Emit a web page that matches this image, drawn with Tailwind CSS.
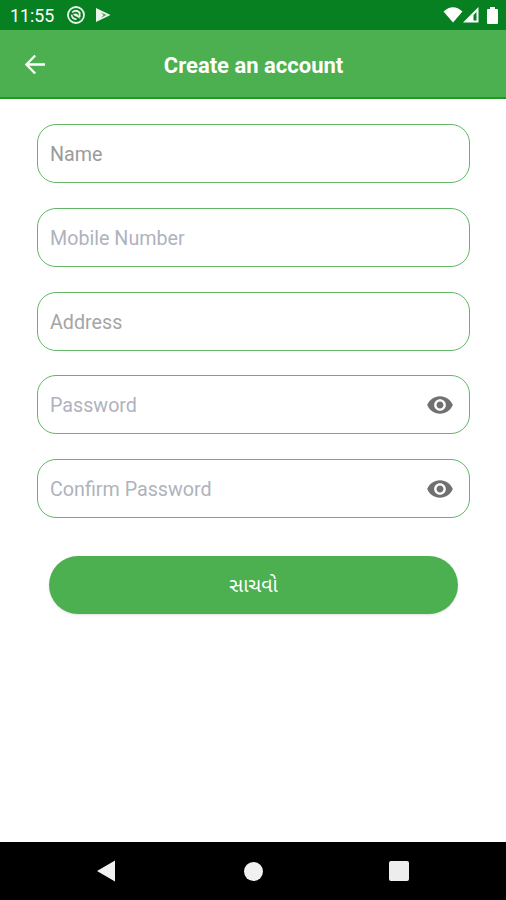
<!DOCTYPE html>
<html lang="en">
<head>
    <meta charset="UTF-8">
    <meta name="viewport" content="width=device-width, initial-scale=1.0">
    <title>Create an account</title>
    <script src="https://cdn.jsdelivr.net/npm/@tailwindcss/browser@4"></script>
    <style>
        body {
            font-family: Roboto, 'Noto Sans', 'Noto Sans Gujarati', sans-serif;
        }
    </style>
</head>
<body class="bg-white">
    <div class="w-[506px] h-[900px] flex flex-col overflow-hidden">
        <!-- Status bar -->
        <div class="h-[30px] shrink-0 bg-[#078021] flex items-center pl-[10px] pr-2 text-white">
            <span class="text-[17.8px] leading-[30px] w-[46px] pt-[2px] whitespace-nowrap">11:55</span>
            <svg class="ml-[10px] w-5 h-5" viewBox="0 0 20 20" fill="none" stroke="#e9f5ea">
                <circle cx="10" cy="10" r="8" stroke-width="1.8" />
                <path d="M6.2 7.4Q10 4 13.6 7.6V12" stroke-width="1.8" />
                <path d="M5.6 9.6Q6 14 10.6 14.2" stroke-width="1.6" />
                <path d="M7 9q3-1.5 5 .8l2.5 4.2-3.7-2.2Q8.6 11.5 7 9z" fill="#e9f5ea" stroke="none" />
            </svg>
            <svg class="ml-[9px] w-4 h-4" viewBox="0 0 16 16">
                <path d="M1 1l14.5 7L1 15z" fill="#e9f5ea" />
                <path d="M6 5.5l5.5 2.5L6 10.8l2.5-2.8z" fill="#4f9f5d" />
            </svg>
            <div class="ml-auto flex items-center">
                <svg class="w-5 h-4" viewBox="0 0 20 16">
                    <path d="M0.5 4.5Q10-4 19.5 4.5L10 15.5z" fill="#fff" />
                </svg>
                <svg class="w-4 h-4" viewBox="0 0 16 16">
                    <path d="M15.5 0v15.5H0z" fill="#fff" />
                    <path d="M13.5 5v8.5h-3V8z" fill="#078021" />
                </svg>
                <svg class="ml-2 w-[11px] h-[17px]" viewBox="0 0 11 17">
                    <path d="M3 0h5v2h2q1 0 1 1v13q0 1-1 1H1q-1 0-1-1V3q0-1 1-1h2z" fill="#fff" />
                </svg>
            </div>
        </div>

        <!-- Header -->
        <header class="h-[69px] shrink-0 bg-[#4caf50] border-b-2 border-[#1f9a22] grid grid-cols-[72px_1fr_72px] items-center">
            <button class="pl-[25px]" aria-label="Back">
                <svg class="w-5 h-5" viewBox="0 0 20 20" fill="none" stroke="#fff" stroke-width="2.3">
                    <path d="M20 10.5H2M10.2 1.5L1.4 10.5l8.8 9" />
                </svg>
            </button>
            <h1 class="text-center text-white font-bold text-[22px] leading-7 pt-[4px] pl-px whitespace-nowrap">Create an account</h1>
        </header>

        <!-- Form -->
        <form class="flex-1 pt-[25px] pl-[37px] pr-[36px]">
            <div class="flex flex-col gap-[24.8px]">
                <input type="text" placeholder="Name" class="block w-full h-[59px] rounded-[19px] border-[1.5px] border-[#62b665] px-3 pt-[2px] text-[19.7px] placeholder:text-[#9b9b9b]">
                <input type="tel" placeholder="Mobile Number" class="block w-full h-[59px] rounded-[19px] border-[1.5px] border-[#62b665] px-3 pt-[2px] text-[19.7px] placeholder:text-[#afb3bd]">
                <input type="text" placeholder="Address" class="block w-full h-[59px] rounded-[19px] border-[1.5px] border-[#62b665] px-3 pt-[2px] text-[19.7px] placeholder:text-[#a5a5a5]">
                <div class="flex items-center h-[59px] rounded-[19px] border-[1.5px] border-[#62b665] pl-3 pr-[15px]">
                    <input type="password" placeholder="Password" class="flex-1 min-w-0 h-full pt-[2px] text-[19.7px] placeholder:text-[#afb3bd]">
                    <svg class="w-7 h-7" viewBox="0 0 24 24" fill="#707070">
                        <path d="M12 4.5C7 4.5 2.73 7.61 1 12c1.73 4.39 6 7.5 11 7.5s9.27-3.11 11-7.5c-1.73-4.39-6-7.5-11-7.5zM12 17c-2.76 0-5-2.24-5-5s2.24-5 5-5 5 2.24 5 5-2.24 5-5 5zm0-8c-1.66 0-3 1.34-3 3s1.34 3 3 3 3-1.34 3-3-1.34-3-3-3z" />
                    </svg>
                </div>
                <div class="flex items-center h-[59px] rounded-[19px] border-[1.5px] border-[#62b665] pl-3 pr-[15px]">
                    <input type="password" placeholder="Confirm Password" class="flex-1 min-w-0 h-full pt-[2px] text-[19.7px] placeholder:text-[#afb3bd]">
                    <svg class="w-7 h-7" viewBox="0 0 24 24" fill="#707070">
                        <path d="M12 4.5C7 4.5 2.73 7.61 1 12c1.73 4.39 6 7.5 11 7.5s9.27-3.11 11-7.5c-1.73-4.39-6-7.5-11-7.5zM12 17c-2.76 0-5-2.24-5-5s2.24-5 5-5 5 2.24 5 5-2.24 5-5 5zm0-8c-1.66 0-3 1.34-3 3s1.34 3 3 3 3-1.34 3-3-1.34-3-3-3z" />
                    </svg>
                </div>
            </div>
            <div class="px-3 mt-[37.8px]">
                <button type="button" lang="gu" class="w-full h-[58px] pt-[2px] rounded-full bg-[#4caf50] text-white text-[19.6px] shadow-sm">સાચવો</button>
            </div>
        </form>

        <!-- Navigation bar -->
        <nav class="h-[58px] shrink-0 bg-black grid grid-cols-[106px_146px_146px_108px] items-center">
            <svg class="justify-self-end -mr-[10px] w-5 h-[22px]" viewBox="0 0 20 22">
                <path d="M19 0.5v21L1 11z" fill="#f1f1f1" />
            </svg>
            <span class="justify-self-end -mr-[11px] w-[19px] h-[19px] rounded-full bg-[#f1f1f1]"></span>
            <span class="justify-self-end -mr-[11px] w-[20px] h-[20px] rounded-[2px] bg-[#ededed]"></span>
        </nav>
    </div>
</body>
</html>
